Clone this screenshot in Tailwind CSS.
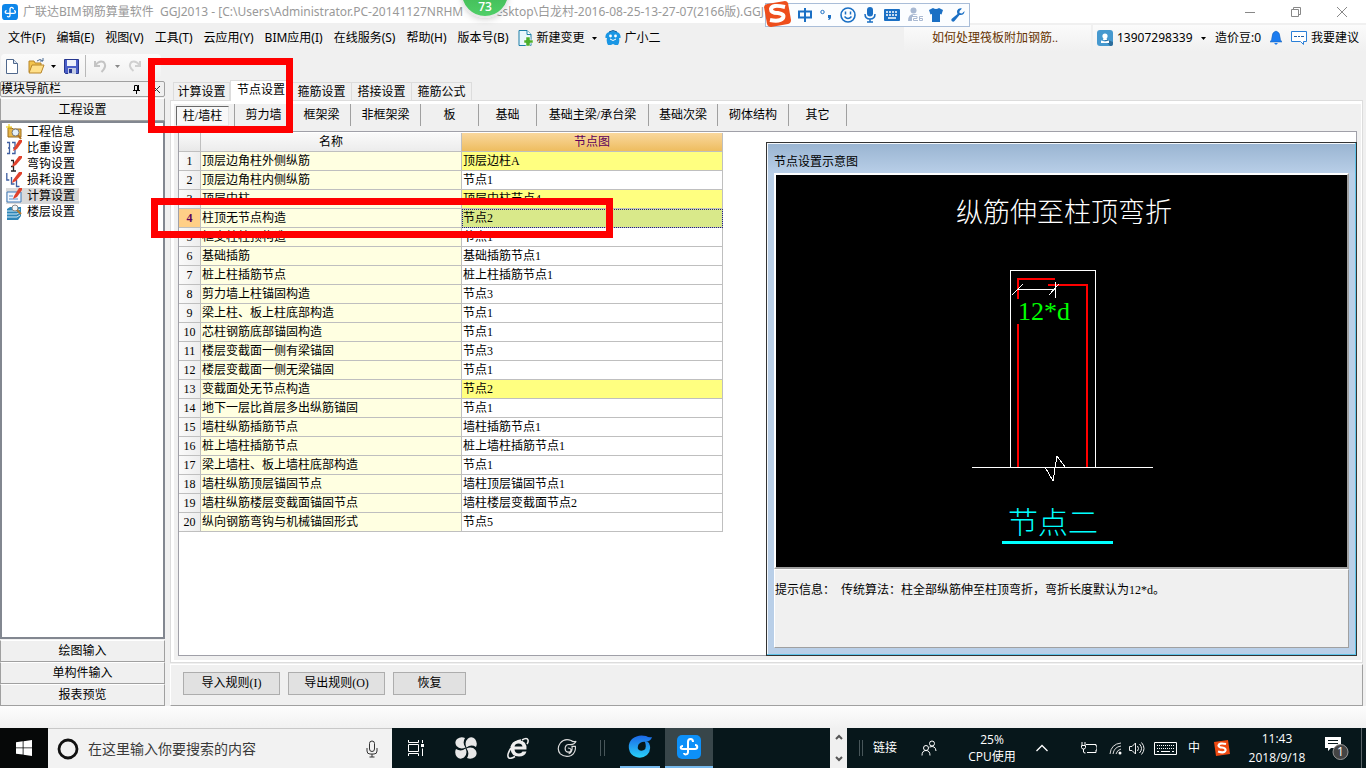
<!DOCTYPE html>
<html lang="zh-CN">
<head>
<meta charset="utf-8">
<title>广联达BIM钢筋算量软件 GGJ2013</title>
<script src="https://cdn.jsdelivr.net/npm/@tailwindcss/browser@4"></script>
</head>
<body class="relative flex h-screen min-h-[768px] flex-col overflow-hidden bg-[#f0f0f0] font-['Liberation_Serif','Noto_Sans_CJK_SC',sans-serif] text-[12px] leading-4 text-black">

<!-- Title bar -->
<header class="relative flex h-[23px] shrink-0 items-center bg-white pl-[2px] font-['Noto_Sans','Noto_Sans_CJK_SC',sans-serif] text-[#999]">
  <svg class="mr-[5px] size-4 shrink-0" viewBox="0 0 24 24"><rect width="24" height="24" rx="5" fill="#0d86ea"/><path d="M17 8c0-4-5-4-5 0v9c0 3-3 3-4 1M7 10c-3 0-3 4 0 4h11c3 0 3-4 0-4" fill="none" stroke="#fff" stroke-width="2"/></svg>
  <h1 class="flex whitespace-nowrap"><span class="w-[137px]">广联达BIM钢筋算量软件</span><span class="w-[315px]">GGJ2013 - [C:\Users\Administrator.PC-20141127NRHM</span><span class="w-[63px] text-right">\Desktop\</span><span>白龙村-2016-08-25-13-27-07(2166版).GGJ12]</span></h1>
  <div class="absolute inset-y-0 right-0 flex w-[397px] items-center justify-end bg-white pr-px">
    <button class="flex w-[46px] justify-center" aria-label="最小化"><svg class="size-3" viewBox="0 0 12 12"><path d="M1 6.500h10" stroke="#888"/></svg></button>
    <button class="flex w-[46px] justify-center" aria-label="还原"><svg class="size-3" viewBox="0 0 12 12"><path d="M1.500 3.500h7v7h-7zM3.500 3.500v-2h7v7h-2" fill="none" stroke="#888"/></svg></button>
    <button class="flex w-[46px] justify-center" aria-label="关闭"><svg class="size-3" viewBox="0 0 12 12"><path d="M1 1l10 10M11 1L1 11" stroke="#888"/></svg></button>
  </div>
</header>

<!-- Menu bar -->
<nav class="flex h-[30px] shrink-0 items-center pl-2 font-['Noto_Sans','Noto_Sans_CJK_SC',sans-serif] whitespace-nowrap">
  <div class="flex gap-[11px]">
    <button>文件(F)</button><button>编辑(E)</button><button>视图(V)</button><button>工具(T)</button><button>云应用(Y)</button><button>BIM应用(I)</button><button>在线服务(S)</button><button>帮助(H)</button><button>版本号(B)</button>
  </div>
  <button class="ml-[9px] flex items-center gap-1">
    <svg class="h-4 w-[15px]" viewBox="0 0 15 16"><path d="M1 .5h8l4 4v11H1z" fill="#eaf7fd" stroke="#1c7fa8"/><path d="M9 .5v4h4" fill="#fff" stroke="#1c7fa8"/><path d="M8 7h4v3h3v3h-3v3H8v-3H6v-3h2z" fill="#4caf2c" stroke="#fff" stroke-width=".5"/></svg>
    新建变更
    <svg class="ml-[3px] h-[3px] w-[5px]" viewBox="0 0 5 3"><path d="M0 0h5L2.500 3z"/></svg>
  </button>
  <button class="ml-2 flex items-center gap-1">
    <svg class="size-4" viewBox="0 0 16 16"><path d="M2 3q6-4 12 0 2 2 1.500 5H14q1 4-1 7h-3l-2-1-2 1H3q-2-3-1-7H.5Q0 5 2 3z" fill="#1a96e4"/><path d="M4 2q4-3 8 0" stroke="#0c5c9c" fill="none"/><circle cx="5.500" cy="6" r="1.400" fill="#fff"/><circle cx="10.500" cy="6" r="1.400" fill="#fff"/><path d="M5 9q3 3 6 0" fill="none" stroke="#fff"/></svg>
    广小二
  </button>
  <div class="ml-auto flex h-[26px] w-[187px] items-center bg-linear-to-b from-[#fbfbfb] to-[#f0f0f0] pl-7 font-['Liberation_Serif','Noto_Sans_CJK_SC',sans-serif]">
    <a href="#" class="text-[#663300]">如何处理筏板附加钢筋..</a>
  </div>
  <div class="ml-[2px] flex h-[26px] w-[273px] items-center bg-linear-to-b from-[#fbfbfb] to-[#f0f0f0] pl-1">
    <button class="flex items-center gap-1">
      <svg class="size-4" viewBox="0 0 16 16"><rect width="16" height="16" rx="3" fill="#4699cf"/><path d="M6 8l7 8h1q2 0 2-2v-2z" fill="#2d6e9c"/><circle cx="8" cy="6" r="2.600" fill="#fff"/><path d="M6.500 8h3l.5 2h-4zM4 10.500l4 1 4-1v2.500H4z" fill="#fff"/></svg>
      <span class="w-[78px] text-left">13907298339</span>
      <svg class="ml-[2px] h-[3px] w-[5px]" viewBox="0 0 5 3"><path d="M0 0h5L2.500 3z"/></svg>
    </button>
    <span class="ml-[9px] w-[46px]">造价豆:0</span>
    <button class="ml-[9px]" aria-label="消息"><svg class="h-4 w-3" viewBox="0 0 12 16"><path d="M6 1q4 1 4 6 0 3 2 5H0q2-2 2-5 0-5 4-6z" fill="#1b7cf0" stroke="#145cb0" stroke-width=".5"/><path d="M4 13h4l-2 2z" fill="#1b7cf0"/></svg></button>
    <button class="ml-[9px] flex items-center gap-1">
      <svg class="h-4 w-4" viewBox="0 0 16 16"><path d="M.5 1.500h15v10h-3v3l-3-3h-9z" fill="#fff" stroke="#2b80d8"/><path d="M3 6.500h3m1 0h2m1 0h3" stroke="#2060a8"/></svg>
      我要建议
    </button>
  </div>
</nav>

<!-- Toolbar -->
<div class="flex h-[26px] shrink-0 items-center">
  <div class="ml-[1px] flex h-6 w-[160px] items-center rounded-sm bg-linear-to-b from-[#fbfbfb] to-[#f1f1f1] pl-[5px]">
    <button aria-label="新建"><svg class="h-[15px] w-3" viewBox="0 0 12 15"><path d="M.5.5h7l4 4v10H.5z" fill="#fff" stroke="#50688c"/><path d="M7.500.5v4h4" fill="#d8e4f2" stroke="#50688c"/></svg></button>
    <button class="ml-[10px] flex items-center gap-[6px]" aria-label="打开"><svg class="h-4 w-[17px]" viewBox="0 0 17 16"><path d="M1 3h5l1 2h6v9H1z" fill="#f3c44d" stroke="#b8862a"/><path d="M4 7h12l-3 8H1z" fill="#ffe08a" stroke="#b8862a"/><path d="M9 3q3-3 6 0m0-3v3h-3" fill="none" stroke="#4c6c94"/></svg><svg class="h-[3px] w-[5px]" viewBox="0 0 5 3"><path d="M0 0h5L2.500 3z"/></svg></button>
    <button class="ml-2" aria-label="保存"><svg class="size-[15px]" viewBox="0 0 15 15"><path d="M.5.5h14v14h-13l-1-1z" fill="#4a5fc8" stroke="#26368e"/><path d="M3 1h9v6H3z" fill="#eef2fb"/><path d="M4 9h8v6H4z" fill="#c4cce4"/><path d="M5 10h3v4H5z" fill="#26368e"/></svg></button>
    <span class="ml-[6px] h-[22px] w-px bg-[#b8b8b8]"></span>
    <button class="ml-2 flex items-center gap-2" aria-label="撤销"><svg class="h-[14px] w-[13px]" viewBox="0 0 13 14"><path d="M1 2v5h5M1.500 6q4-5 8-3 4 4-2 10" fill="none" stroke="#c4c4c4" stroke-width="2"/></svg><svg class="h-[3px] w-[5px]" viewBox="0 0 5 3"><path d="M0 0h5L2.500 3z" fill="#888"/></svg></button>
    <button class="ml-2" aria-label="重做"><svg class="h-[14px] w-[13px]" viewBox="0 0 13 14"><path d="M12 2v5H7M11.500 6q-4-5-8-3-4 4 2 9" fill="none" stroke="#d0d0d0" stroke-width="2"/></svg></button>
  </div>
</div>

<!-- Workspace -->
<div class="flex min-h-0 flex-1 pt-[1px]">

  <!-- Module navigation -->
  <aside class="flex w-[165px] shrink-0 flex-col">
    <div class="mt-[1px] flex h-4 items-center rounded-[2px] border border-[#a0a0a0]">
      <span class="whitespace-nowrap">模块导航栏</span>
      <button class="mr-[11px] ml-auto" aria-label="固定"><svg class="h-[9px] w-[9px]" viewBox="0 0 9 9"><path d="M2.500 5.500v-5h3v5M6.500 0v5.500M1 5.500h7M4.500 5.500V9" fill="none" stroke="#000"/></svg></button>
      <button class="mr-[3px]" aria-label="关闭"><svg class="size-[9px]" viewBox="0 0 9 9"><path d="M1 1l7 7M8 1L1 8" stroke="#333"/></svg></button>
    </div>
    <button class="mt-[1px] h-[23px] border border-[#a0a0a0] border-t-white">工程设置</button>
    <ul class="flex-1 border-2 border-[#828790] bg-white pt-px pl-1">
      <li class="flex h-4 items-center gap-[5px] whitespace-nowrap"><svg class="size-4" viewBox="0 0 16 16"><path d="M2 4h4l1 1h8v8H2z" fill="#e8b64a" stroke="#9a6c1c"/><circle cx="9.500" cy="8.500" r="3.500" fill="#e4f0fa" stroke="#777"/><path d="M12 11l3 4" stroke="#b07020" stroke-width="2"/><path d="M3 0v6M0 3h6" stroke="#e8c400"/></svg>工程信息</li>
      <li class="flex h-4 items-center gap-[5px] whitespace-nowrap"><svg class="size-4" viewBox="0 0 16 16"><path d="M1 2.500h2.500v11H1M6 2.500h3v11H6M3.500 8H2M9 8H7" fill="none" stroke="#3e5ea0" stroke-width="1.300"/><path d="M8 8l5-8h3v2l-5 7-4 2z" fill="#e0422c"/></svg>比重设置</li>
      <li class="flex h-4 items-center gap-[5px] whitespace-nowrap"><svg class="size-4" viewBox="0 0 16 16"><path d="M5 4.500h3M7.500 5v10M5 10.500h3M5 15h5" fill="none" stroke="#222" stroke-width="1.300"/><path d="M7 8l6-8h3v2l-6 7-4 2z" fill="#e0422c"/></svg>弯钩设置</li>
      <li class="flex h-4 items-center gap-[5px] whitespace-nowrap"><svg class="size-4" viewBox="0 0 16 16"><path d="M.8 1v7h2.500M5.500 5v7h3M10.500 8v6.500h3" fill="none" stroke="#3e5ea0" stroke-width="1.300"/><path d="M7 8l6-8h3v2l-6 7-4 2z" fill="#e0422c"/></svg>损耗设置</li>
      <li class="flex h-4 w-[73px] items-center gap-[5px] bg-[#d9d9d9] whitespace-nowrap"><svg class="size-4" viewBox="0 0 16 16"><path d="M1 4h14v10H1z" fill="#f2f7fd" stroke="#3c78b8"/><path d="M3 8h4M3 11h9" stroke="#5c90c8"/><path d="M8 8l5-8h3v2l-5 7-4 2z" fill="#e0422c"/></svg>计算设置</li>
      <li class="flex h-4 items-center gap-[5px] whitespace-nowrap"><svg class="size-4" viewBox="0 0 16 16"><path d="M1 5l3-2h11v9l-3 4H1z" fill="#2e86b8"/><path d="M1 7h10l3-2M1 10h10l3-2M1 13h10l3-2" fill="none" stroke="#d4ecf8"/><circle cx="9" cy="4" r="3" fill="#eef6fa" stroke="#888"/><path d="M11 6l4 4" stroke="#b07830" stroke-width="2"/></svg>楼层设置</li>
    </ul>
    <button class="mt-[1px] h-[22px] border border-[#a0a0a0] border-t-white">绘图输入</button>
    <button class="h-[22px] border border-[#a0a0a0] border-t-white">单构件输入</button>
    <button class="h-[22px] border border-[#a0a0a0] border-t-white">报表预览</button>
  </aside>

  <!-- Settings pages -->
  <main class="ml-[5px] flex min-w-0 flex-1 flex-col pr-[3px]">
    <div class="z-10 flex h-5 items-end pl-[3px]">
      <button class="h-[18px] w-[57px] border border-b-0 border-[#dcdcdc]">计算设置</button>
      <button class="-mb-px h-[21px] w-[62px] border border-b-0 border-[#dcdcdc] bg-white pb-[2px]">节点设置</button>
      <button class="h-[18px] w-[60px] border border-b-0 border-l-0 border-[#dcdcdc]">箍筋设置</button>
      <button class="h-[18px] w-[60px] border border-b-0 border-l-0 border-[#dcdcdc]">搭接设置</button>
      <button class="h-[18px] w-[60px] border border-b-0 border-l-0 border-[#dcdcdc]">箍筋公式</button>
    </div>
    <section class="flex min-h-0 flex-1 flex-col border border-[#dcdcdc] bg-white p-[3px] pr-[1px] pb-[2px]">
      <div class="flex min-h-0 flex-1 flex-col bg-[#f0f0f0] pr-1 pb-1 pl-1">
        <div class="-ml-1 flex h-[27px] items-start">
          <div class="flex h-[22px] w-[61px] items-center border-r border-[#a0a0a0] pl-[2px]"><button class="mt-px h-5 w-[53px] border border-[#e4e4e4] border-t-[#696969] border-l-[#696969] bg-[#f8f8f8]">柱/墙柱</button></div>
          <button class="h-[22px] w-[58px] border-r border-[#a0a0a0]">剪力墙</button>
          <button class="h-[22px] w-[58px] border-r border-[#a0a0a0]">框架梁</button>
          <button class="h-[22px] w-[70px] border-r border-[#a0a0a0]">非框架梁</button>
          <button class="h-[22px] w-[58px] border-r border-[#a0a0a0]">板</button>
          <button class="h-[22px] w-[58px] border-r border-[#a0a0a0]">基础</button>
          <button class="h-[22px] w-[112px] border-r border-[#a0a0a0]">基础主梁/承台梁</button>
          <button class="h-[22px] w-[69px] border-r border-[#a0a0a0]">基础次梁</button>
          <button class="h-[22px] w-[71px] border-r border-[#a0a0a0]">砌体结构</button>
          <button class="h-[22px] w-[58px] border-r border-[#a0a0a0]">其它</button>
        </div>
        <div class="flex min-h-0 flex-1 items-stretch border border-[#a0a0a8] bg-white">
          <div class="pt-[1px]">
            <table class="w-[544px] table-fixed border-separate border-spacing-0 leading-[18px]">
              <colgroup><col class="w-[22px]"><col class="w-[261px]"><col class="w-[261px]"></colgroup>
              <thead>
                <tr class="h-[19px]">
                  <th class="border-r border-b border-[#bfbfbf] bg-linear-to-b from-[#fafafa] to-[#e8e8e8] p-0"></th>
                  <th class="border-r border-b border-[#bfbfbf] bg-linear-to-b from-[#fafafa] to-[#ececec] p-0 font-normal">名称</th>
                  <th class="border-r border-b border-[#bfbfbf] bg-linear-to-b from-[#f9d79c] to-[#eebd5e] p-0 font-normal text-[#5b005b]">节点图</th>
                </tr>
              </thead>
              <tbody id="rows"></tbody>
            </table>
          </div>

          <!-- Node diagram window -->
          <section class="mt-[10px] -mr-px -mb-px ml-[43px] flex min-w-0 flex-1 flex-col border border-[#333] bg-[#b9cfe8] bg-linear-to-b from-[#99b4d1] to-[#b9cfe8] to-6% px-[7px] pb-[7px] shadow-[inset_-1px_-1px_0_#5fc3e8,inset_1px_1px_0_#f4f8fc]">
            <h2 class="flex h-[30px] shrink-0 items-center pt-2 font-['Noto_Sans','Noto_Sans_CJK_SC',sans-serif]">节点设置示意图</h2>
            <div class="flex h-[396px] shrink-0 justify-start overflow-hidden border-2 border-white border-r-[#a0a0a0] border-b-[#a0a0a0] bg-black">
              <svg class="h-[392px] w-[572px] shrink-0" viewBox="776 175 572 392" shape-rendering="crispEdges">
                <text x="956" y="222" fill="#fff" font-size="27" font-weight="300" font-family="'Noto Sans CJK SC', sans-serif">纵筋伸至柱顶弯折</text>
                <path d="M1010.500 467V270.500h85V467M972 467.500h181" fill="none" stroke="#fff"/>
                <path d="M1055 279h-37v20M1018 324v143M1048 285h39v182" fill="none" stroke="#f00" stroke-width="2"/>
                <path d="M1018 289.500h37M1055.500 282v16" stroke="#fff"/>
                <path d="M1012 295l11-11M1049 295l10-11M1045 467l8 14 4-25 8 11" fill="none" stroke="#fff"/>
                <text x="1018" y="320" fill="#0f0" font-size="26" font-family="'Liberation Serif', serif">12*d</text>
                <text x="1008" y="533" fill="#0ff" font-size="30" font-weight="300" font-family="'Noto Sans CJK SC', sans-serif">节点二</text>
                <path d="M1002 542.500h111" stroke="#0ff" stroke-width="3"/>
              </svg>
            </div>
            <p class="flex-1 border border-white border-r-[#a0a0a0] border-b-[#a0a0a0] bg-[#f0f0f0] pt-3 whitespace-pre">提示信息：  传统算法：柱全部纵筋伸至柱顶弯折，弯折长度默认为12*d。</p>
          </section>
        </div>
      </div>
    </section>
    <div class="mt-[1px] flex h-[42px] shrink-0 items-center gap-2 border border-[#a0a0a0] border-t-white border-l-white pl-3">
      <button class="-mt-1 h-[23px] w-[97px] border border-[#adadad] bg-[#e1e1e1]">导入规则(I)</button>
      <button class="-mt-1 h-[23px] w-[97px] border border-[#adadad] bg-[#e1e1e1]">导出规则(O)</button>
      <button class="-mt-1 h-[23px] w-[73px] border border-[#adadad] bg-[#e1e1e1]">恢复</button>
    </div>
  </main>
</div>
<div class="h-[22px] shrink-0 bg-linear-to-b from-[#fdfdfd] to-[#f1f1f1]"></div>

<!-- Taskbar -->
<footer class="flex h-10 shrink-0 items-center bg-[#07171b] font-['Open_Sans','Noto_Sans_CJK_SC',sans-serif] text-white">
  <button class="flex h-10 w-12 items-center justify-center bg-[#060808]" aria-label="开始"><svg class="size-4" viewBox="0 0 16 16"><path d="M0 2.300L6.700 1.300v6.200H0zM7.500 1.200L16 0v7.500H7.500zM0 8.300h6.700v6.300L0 13.700zM7.500 8.300H16V16l-8.500-1.200z" fill="#fff"/></svg></button>
  <label class="flex h-10 w-[344px] items-center border-t border-[#c8c8c8] bg-[#f2f2f2] pl-[9px]">
    <svg class="size-[22px] shrink-0" viewBox="0 0 22 22"><circle cx="11" cy="11" r="9" fill="none" stroke="#111" stroke-width="2.800"/></svg>
    <input type="text" placeholder="在这里输入你要搜索的内容" aria-label="搜索" class="ml-[9px] min-w-0 flex-1 bg-transparent text-[14px] leading-5 text-black outline-none placeholder:text-[#3a3a3a]">
    <svg class="mr-[14px] h-[18px] w-3 shrink-0" viewBox="0 0 12 18"><rect x="3.500" y="1" width="5" height="10.500" rx="2.500" fill="none" stroke="#333"/><path d="M1 8v3q0 3 3 3h4q3 0 3-3V8M6 14v3M3.500 17h5" fill="none" stroke="#333"/></svg>
  </label>
  <button class="flex h-10 w-12 items-center justify-center" aria-label="任务视图"><svg class="size-4" viewBox="0 0 16 16"><path d="M.5 0v2.500h10V0M.5 16v-2.500h10V16M.5 4.500h10v7H.5zM14.500 0v3M14.500 8.500V16" fill="none" stroke="#fff"/><path d="M13 4h3v3h-3z" fill="#fff"/></svg></button>
  <button class="flex h-10 w-[52px] items-center justify-center" aria-label="应用"><svg class="size-[22px]" viewBox="0 0 22 22"><g fill="#e8e8e8"><path d="M10.500 10.500Q5 13 1.500 9-1 5 2 2q4-3 8-1-3 5 .5 9.500z"/><path d="M11.500 10.500Q9 5 13 1.500q4-2.500 7 .5 3 4 1 8-5-3-9.500.500z"/><path d="M11.500 11.500q5.500-2.500 9 1.500 2.500 4-.5 7-4 3-8 1 3-5-.5-9.500z"/><path d="M10.500 11.500Q13 17 9 20.500 5 23 2 20q-3-4-1-8 5 3 9.500-.500z"/></g></svg></button>
  <button class="flex h-10 w-[52px] items-center justify-center" aria-label="Internet Explorer"><svg class="size-[22px]" viewBox="0 0 22 22"><path d="M19.500 12.500H7.500q.5 4 4.500 4 2.500 0 3.500-2h4q-1.500 5-7.500 5-8 0-8.500-8 .5-8 8.500-8t7.500 9zM7.500 9.500h8q-.5-3-4-3t-4 3z" fill="#eee"/><path d="M15 3q5-3 6 0 .5 2-1 4M4 11Q-1 19 2 21q2 1 6-1.500M4 10q4-6 10-7" fill="none" stroke="#eee" stroke-width="1.600"/></svg></button>
  <button class="flex h-10 w-[46px] items-center justify-center" aria-label="广联达"><svg class="size-5" viewBox="0 0 24 24"><path d="M23 4q-2 4-7 4-5-1-6 3-1 5 3 6 4 0 4-3-1-2-4-2M23 4q-4 1-6-1Q9 0 4 6-1 13 4 19q6 5 13 2 6-4 5-11h-4q1 7-4 9" fill="none" stroke="#ddd" stroke-width="1.400"/></svg></button>
  <span class="ml-[10px] h-4 w-[5px] border-x border-[#48565a]"></span>
  <button class="ml-[15px] flex h-10 w-10 items-center justify-center border-b-2 border-[#76b9ed]" aria-label="广联达客户端"><svg class="size-6" viewBox="0 0 24 24"><defs><linearGradient id="g" x2="0" y2="1"><stop stop-color="#1c68e8"/><stop offset="1" stop-color="#28d0f8"/></linearGradient></defs><path d="M24 2q-3 1-6-1Q10-1 4 4 0 8 1 14q1 6 7 8 6 2 11-2 5-5 2-12-2-2-4-1 2 6-1 8-4 2-6-1-1-4 2-6 3-2 6-1 5-1 6-5z" fill="url(#g)"/></svg></button>
  <button class="ml-[5px] flex h-10 w-12 items-center justify-center border-b-2 border-[#76b9ed] bg-[#38464a]" aria-label="GGJ2013"><svg class="size-6" viewBox="0 0 24 24"><rect width="24" height="24" rx="5" fill="#0d90f8"/><path d="M16 7c0-4-5-4-5 0v10c0 3-4 3-4 1M6 11c-3 0-3 3 0 3h12c3 0 3-4 0-4" fill="none" stroke="#fff" stroke-width="2"/></svg></button>
  <div class="ml-auto flex h-10 w-[17px] flex-col items-center justify-between bg-[#f0f0f0] py-[6px]">
    <button aria-label="向上"><svg class="h-[6px] w-2" viewBox="0 0 8 6"><path d="M1 5l3-3 3 3" fill="none" stroke="#555" stroke-width="2"/></svg></button>
    <button aria-label="向下"><svg class="h-[6px] w-2" viewBox="0 0 8 6"><path d="M1 1l3 3 3-3" fill="none" stroke="#555" stroke-width="2"/></svg></button>
  </div>
  <div class="flex h-10 w-[519px] items-center">
    <span class="ml-3 h-4 w-1 border-x border-[#48565a]"></span>
    <button class="ml-[10px] w-6 whitespace-nowrap">链接</button>
    <button class="ml-6 flex w-4 justify-center" aria-label="人脉"><svg class="size-4" viewBox="0 0 16 16"><g fill="none" stroke="#fff"><circle cx="5" cy="8" r="2.500"/><path d="M1 15.500q0-5 4-5t4 5"/><circle cx="11" cy="3.500" r="2.500"/><path d="M8.500 7q6-2 6.500 4"/></g></svg></button>
    <div class="ml-[27px] w-14 text-center leading-[17px] whitespace-nowrap">25%<br>CPU使用</div>
    <button class="ml-4" aria-label="显示隐藏的图标"><svg class="h-3 w-3" viewBox="0 0 12 12"><path d="M0.500 9L6 3.500 11.500 9" fill="none" stroke="#fff" stroke-width="1.300"/></svg></button>
    <svg class="ml-[33px] h-3 w-4" viewBox="0 0 16 12"><path d="M5 2.500h10V4h1v4h-1v2.500H6M1 0v3M4 0v3M.5 3.500h4v2q0 1.500-2 1.500t-2-1.500zM2.500 7v3q0 1 2 1" fill="none" stroke="#fff"/></svg>
    <svg class="ml-3 size-[13px]" viewBox="0 0 13 13"><path d="M1 12Q2 2 12 1M4 12q1-7 8-8M7 12q1-4 5-5" fill="none" stroke="#ddd"/><circle cx="11" cy="11" r="1.500" fill="#fff"/></svg>
    <svg class="ml-[7px] h-[13px] w-4" viewBox="0 0 16 13"><path d="M.5 4.500h2.500l3.500-3.500v11L3 8.500H.5zM8.500 4q2 2.500 0 5M10.500 2q4 4.500 0 9M12.500.5q5 6 0 12" fill="none" stroke="#eee"/></svg>
    <svg class="ml-[9px] h-[13px] w-[23px]" viewBox="0 0 23 13"><path d="M.5.5h22v12H.5z" fill="none" stroke="#fff"/><path d="M3 3.500h17M3 6.500h17" stroke="#fff" stroke-dasharray="1 1"/><path d="M3 9.500h2M7 9.500h9M18 9.500h2" stroke="#fff"/></svg>
    <button class="ml-[11px]">中</button>
    <svg class="ml-[14px] size-4" viewBox="0 0 16 16"><path d="M0 2L14 0l2 14-14 2z" fill="#f04a12"/><path d="M12 4Q5 2.500 4.500 5.500 5 7.500 8 7.500q4 .5 3.500 3-1 3-7.500 1" fill="none" stroke="#fff" stroke-width="2.200"/></svg>
    <button class="ml-[15px] w-[64px] text-center leading-[19px]">11:43<br>2018/9/18</button>
    <button class="ml-4 flex items-center" aria-label="通知"><svg class="h-6 w-6" viewBox="0 0 24 24"><path d="M0 1h16v11H6l-3 3v-3H0z" fill="#fff"/><path d="M3 4.500h10M3 7.500h10" stroke="#07171b"/><circle cx="15.500" cy="16" r="7.500" fill="#444" stroke="#999"/><text x="12" y="20" font-size="12" fill="#fff" font-family="'Open Sans', sans-serif">1</text></svg></button>
    <span class="mr-1 ml-auto h-10 w-px bg-[#5a6468]"></span>
  </div>
</footer>

<!-- Floating speed ball -->
<div class="absolute top-[-32px] left-[460px] flex size-[50px] items-end justify-center rounded-full border-2 border-[#e8e8e8] bg-linear-to-b from-[#35a845] to-[#4fcf68] pb-[3px] font-['Open_Sans',sans-serif] leading-3 font-semibold text-white shadow-md">73</div>

<!-- Floating input-method bar -->
<div class="absolute top-[3px] left-[765px] flex h-6 w-[205px] items-center border border-[#a9bdd8] bg-[#fbfdff] pl-8">
  <svg class="absolute top-[-4px] left-[-3px] h-7 w-7" viewBox="0 0 28 28"><path d="M4 4L22 1q2 0 3 2l3 17q0 3-3 4L8 27q-3 0-4-3L1 7q0-2 3-3z" fill="#ee4e1c"/><path d="M22 7Q9 4 8 9q0 4 7 4 7 1 5 5-3 4-13 2" fill="none" stroke="#fff" stroke-width="4"/></svg>
  <button class="w-[14px] text-[#1a6fc4]" aria-label="中文"><svg class="size-[14px]" viewBox="0 0 14 14"><path d="M1 3.500h12v6H1zM7 0v14" fill="none" stroke="#1a6fc4" stroke-width="2"/></svg></button>
  <button class="ml-2" aria-label="标点"><svg class="h-3 w-3" viewBox="0 0 12 12"><circle cx="2.500" cy="3" r="1.700" fill="none" stroke="#1a6fc4"/><path d="M8 6h3v2q0 3-3 3l1-2H8z" fill="#1a6fc4"/></svg></button>
  <button class="ml-2" aria-label="表情"><svg class="size-4" viewBox="0 0 16 16"><circle cx="8" cy="8" r="7" fill="none" stroke="#1a6fc4" stroke-width="1.600"/><path d="M5.500 4.500v3M10.500 4.500v3M4.500 9.500q3.500 4 7 0" fill="none" stroke="#1a6fc4" stroke-width="1.500"/></svg></button>
  <button class="ml-2" aria-label="语音"><svg class="h-4 w-3" viewBox="0 0 12 16"><rect x="3" width="6" height="9.500" rx="3" fill="#1a6fc4"/><path d="M1 7q0 5 5 5t5-5M6 12v3M3 15h6" fill="none" stroke="#1a6fc4" stroke-width="1.500"/></svg></button>
  <button class="ml-2" aria-label="软键盘"><svg class="h-3 w-4" viewBox="0 0 16 12"><rect width="16" height="12" rx="1" fill="#1a6fc4"/><path d="M2 3h12M2 6h12" stroke="#fff" stroke-width="1.500" stroke-dasharray="2 1"/><path d="M4 9h8" stroke="#fff" stroke-width="1.500"/></svg></button>
  <button class="ml-2" aria-label="账户"><svg class="size-4" viewBox="0 0 16 16"><circle cx="5.500" cy="3.500" r="3" fill="#a9b9d2"/><path d="M0 14q0-7 6-7 4 0 5 3v4z" fill="#a9b9d2"/><path d="M5 9.500h4v2H5.500v2H9M15 9.500h-3.500v4h3v-2h-3" fill="none" stroke="#fff" stroke-width="3"/><path d="M5 9.500h4v2H5.500v2H9M15 9.500h-3.500v4h3v-2h-3" fill="none" stroke="#a9b9d2"/></svg></button>
  <button class="ml-[5px]" aria-label="皮肤"><svg class="size-[14px]" viewBox="0 0 14 14"><path d="M4 0q3 2 6 0l4 2-1.500 4.500L11 6v8H3V6l-1.500.5L0 2z" fill="#1a6fc4"/></svg></button>
  <button class="ml-2" aria-label="工具箱"><svg class="size-[14px]" viewBox="0 0 14 14"><path d="M13.500 3L11 5.500 8.500 5 8.500 3 11 .5Q7-.5 6 3q0 2 .5 3L.5 11q-.5 2 1 2.500 1 .5 2-.5l5-6q5 .5 5-4z" fill="#1a6fc4"/></svg></button>
</div>

<!-- Highlight frames -->
<div class="pointer-events-none absolute top-[58px] left-[148px] z-20 h-[75px] w-[145px] border-[7px] border-[#f00]"></div>
<div class="pointer-events-none absolute top-[198px] left-[151px] z-20 h-10 w-[462px] border-[7px] border-[#f00]"></div>

<script>
const data = [
  ['顶层边角柱外侧纵筋', '顶层边柱A', true],
  ['顶层边角柱内侧纵筋', '节点1'],
  ['顶层中柱', '顶层中柱节点4', true],
  ['柱顶无节点构造', '节点2', false, true],
  ['框支柱柱顶构造', '节点1'],
  ['基础插筋', '基础插筋节点1'],
  ['桩上柱插筋节点', '桩上柱插筋节点1'],
  ['剪力墙上柱锚固构造', '节点3'],
  ['梁上柱、板上柱底部构造', '节点1'],
  ['芯柱钢筋底部锚固构造', '节点1'],
  ['楼层变截面一侧有梁锚固', '节点3'],
  ['楼层变截面一侧无梁锚固', '节点1'],
  ['变截面处无节点构造', '节点2', true],
  ['地下一层比首层多出纵筋锚固', '节点1'],
  ['墙柱纵筋插筋节点', '墙柱插筋节点1'],
  ['桩上墙柱插筋节点', '桩上墙柱插筋节点1'],
  ['梁上墙柱、板上墙柱底部构造', '节点1'],
  ['墙柱纵筋顶层锚固节点', '墙柱顶层锚固节点1'],
  ['墙柱纵筋楼层变截面锚固节点', '墙柱楼层变截面节点2'],
  ['纵向钢筋弯钩与机械锚固形式', '节点5']
];
document.getElementById('rows').innerHTML = data.map(([name, node, changed, active], i) => `
<tr class="h-[19px]">
  <td class="border-r border-b border-[#bfbfbf] p-0 text-center ${active ? 'bg-[#ffcf87] text-[#5b005b] font-bold' : 'bg-linear-to-r from-[#fafafa] to-[#ededed]'}">${i + 1}</td>
  <td class="border-r border-b border-[#bfbfbf] bg-[#ffffe1] p-0 pl-px">${name}</td>
  <td class="border-r border-b border-[#bfbfbf] p-0 pl-px ${active ? 'bg-[#d9e98a] outline-1 -outline-offset-1 outline-dotted outline-[#202080]' : changed ? 'bg-[#ffff80]' : 'bg-white'}">${node}</td>
</tr>`).join('');
</script>
</body>
</html>
